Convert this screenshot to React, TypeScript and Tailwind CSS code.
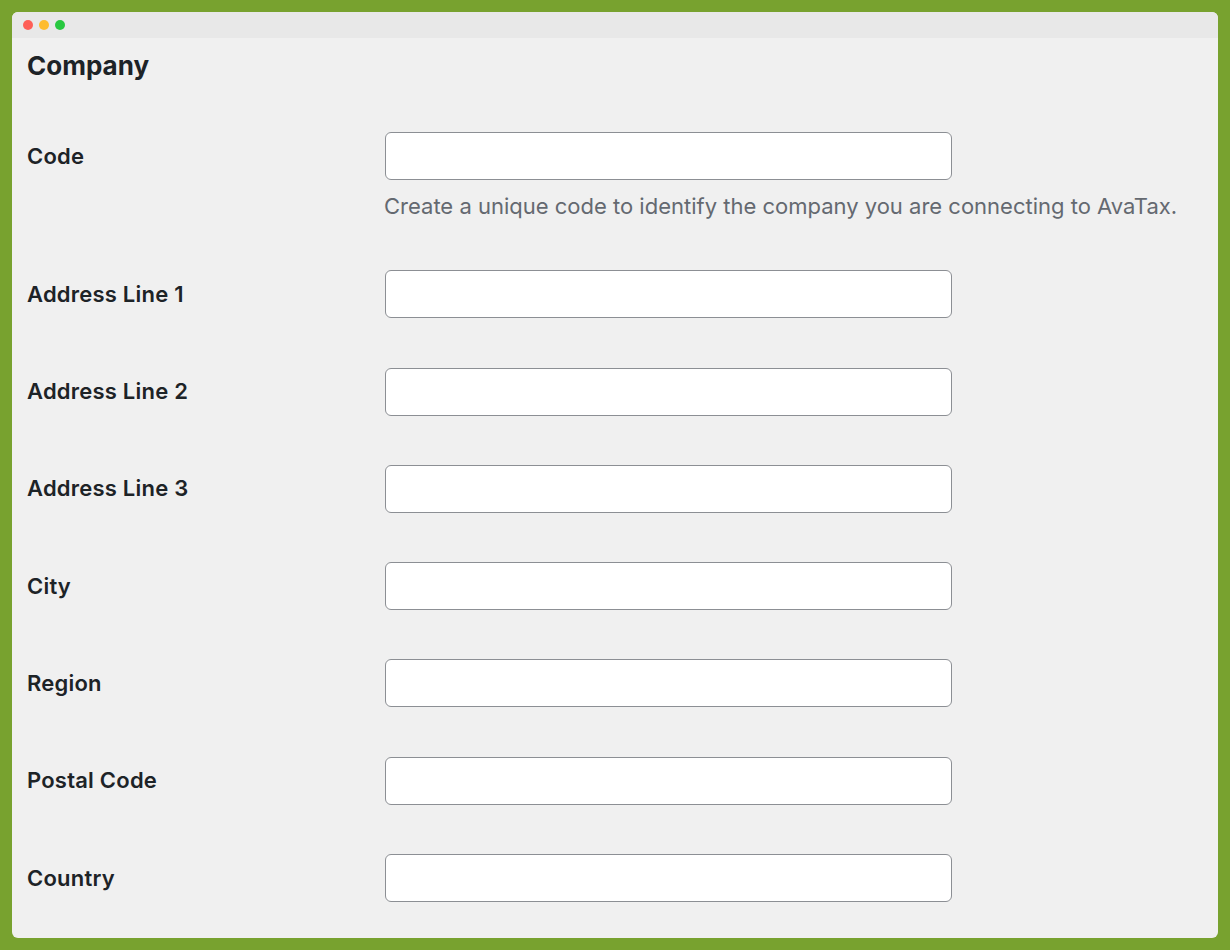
import React from 'react';

const fields = [
    'Address Line 1',
    'Address Line 2',
    'Address Line 3',
    'City',
    'Region',
    'Postal Code',
    'Country',
];

const Field: React.FC<{ label: string; help?: string }> = ({ label, help }) => (
    <div className="flex">
        <div className="w-[358px] h-[48px] flex items-center text-[22px] font-semibold text-[#1d2327] tracking-[0.01em]">
            {label}
        </div>
        <div className="flex flex-col">
            <input
                type="text"
                className="w-[567px] h-[48px] bg-white border border-[#8c8f94] rounded-[6px] outline-none px-3"
            />
            {help && (
                <p className="mt-[11px] text-[22px] leading-[30px] text-[#646970] -ml-[1px] whitespace-nowrap">{help}</p>
            )}
        </div>
    </div>
);

export default function App() {
    return (
        <div
            className="w-[1230px] h-[950px] bg-[#78a22f] p-3"
            style={{ fontFamily: 'Inter, "Noto Sans", sans-serif' }}
        >
            <div className="h-full rounded-[6px] bg-[#f0f0f0] flex flex-col overflow-hidden">
                <div className="h-[26px] bg-[#e8e8e8] flex items-center gap-[6px] pl-[11px] shrink-0">
                    <span className="w-[10px] h-[10px] rounded-full bg-[#fe5f57]" />
                    <span className="w-[10px] h-[10px] rounded-full bg-[#febc2e]" />
                    <span className="w-[10px] h-[10px] rounded-full bg-[#28c840]" />
                </div>
                <div className="px-[15px] pt-[12px] flex flex-col">
                    <h1 className="text-[26px] leading-[32px] font-bold text-[#1d2327] mb-[50px]">Company</h1>
                    <div className="flex flex-col gap-[49.3px]">
                        <Field
                            label="Code"
                            help="Create a unique code to identify the company you are connecting to AvaTax."
                        />
                        {fields.map((f) => (
                            <Field key={f} label={f} />
                        ))}
                    </div>
                </div>
            </div>
        </div>
    );
}
